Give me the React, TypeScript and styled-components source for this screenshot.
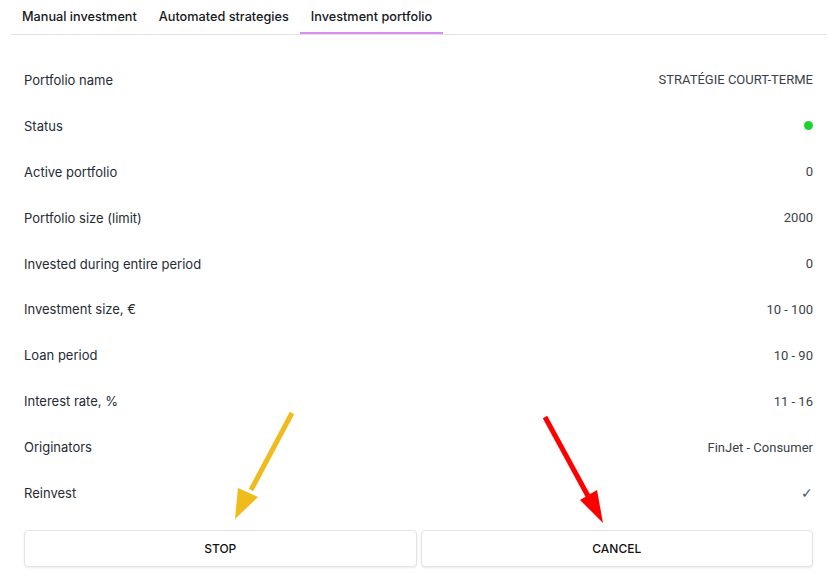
import styled, { createGlobalStyle } from 'styled-components';

const GlobalStyle = createGlobalStyle`
  body {
    margin: 0;
    background: #fff;
    font-family: 'Inter', 'Liberation Sans', sans-serif;
    color: #1f2530;
  }
`;

const rows: { label: string; value: string }[] = [
  { label: 'Portfolio name', value: 'STRATÉGIE COURT-TERME' },
  { label: 'Status', value: '' },
  { label: 'Active portfolio', value: '0' },
  { label: 'Portfolio size (limit)', value: '2000' },
  { label: 'Invested during entire period', value: '0' },
  { label: 'Investment size, €', value: '10 - 100' },
  { label: 'Loan period', value: '10 - 90' },
  { label: 'Interest rate, %', value: '11 - 16' },
  { label: 'Originators', value: 'FinJet - Consumer' },
  { label: 'Reinvest', value: '✓' },
];

const tabs = ['Manual investment', 'Automated strategies', 'Investment portfolio'];

const App = () => {
  return (
    <>
      <GlobalStyle />
      <Page>
        <TabBar>
          {tabs.map((t, i) => (
            <Tab key={t} $active={i === 2}>
              {t}
            </Tab>
          ))}
        </TabBar>
        <Content>
          <List>
            {rows.map((r) => (
              <Row key={r.label}>
                <Label>{r.label}</Label>
                {r.label === 'Status' ? (
                  <StatusDot />
                ) : (
                  <Value $light={r.label === 'Reinvest'}>{r.value}</Value>
                )}
              </Row>
            ))}
          </List>
          <Actions>
            <ActionBtn>STOP</ActionBtn>
            <ActionBtn>CANCEL</ActionBtn>
          </Actions>
          <Arrow viewBox='0 0 833 577' width='833' height='577'>
            <line x1='292' y1='413' x2='251' y2='490' stroke='#f0bb1c' strokeWidth='5' />
            <polygon points='235,519 238,488 258,497' fill='#f0bb1c' />
            <line x1='545' y1='417' x2='588' y2='496' stroke='#ff0000' strokeWidth='5' />
            <polygon points='603,523 580,500 597,490' fill='#ff0000' />
          </Arrow>
        </Content>
      </Page>
    </>
  );
};

const Page = styled.div`
  width: 833px;
  height: 577px;
  box-sizing: border-box;
  padding: 0 6px 0 11px;
  position: relative;
  overflow: hidden;
`;

const TabBar = styled.div`
  display: flex;
  height: 35px;
  border-bottom: 1px solid #e2e2e2;
  box-sizing: border-box;
`;

const Tab = styled.div<{ $active?: boolean }>`
  padding: 1px 11px 0;
  display: flex;
  align-items: center;
  font-size: 12.7px;
  font-weight: 500;
  color: #141821;
  height: 34px;
  box-sizing: border-box;
  border-bottom: 2px solid ${(p) => (p.$active ? '#d98ff0' : 'transparent')};
`;

const Content = styled.div`
  padding: 22px 14px 0 13px;
`;

const List = styled.div`
  display: flex;
  flex-direction: column;
`;

const Row = styled.div`
  height: 45.9px;
  display: flex;
  align-items: center;
  justify-content: space-between;
`;

const Label = styled.span`
  font-size: 13px;
  color: #252b36;
`;

const Value = styled.span<{ $light?: boolean }>`
  font-family: 'Roboto', 'Liberation Sans', sans-serif;
  font-size: ${(p) => (p.$light ? '14px' : '13px')};
  font-weight: ${(p) => (p.$light ? 300 : 400)};
  color: ${(p) => (p.$light ? '#4a5566' : '#3a3f48')};
`;

const StatusDot = styled.span`
  width: 9px;
  height: 9px;
  border-radius: 50%;
  background: #1ed12e;
`;

const Actions = styled.div`
  margin-top: 14px;
  display: grid;
  grid-template-columns: 1fr 1fr;
  gap: 4px;
`;

const ActionBtn = styled.button`
  height: 37px;
  background: #fff;
  border: 1px solid #e3e3e3;
  border-radius: 4px;
  box-shadow: 0 1px 2px rgba(0, 0, 0, 0.08);
  font-family: 'Inter', 'Liberation Sans', sans-serif;
  font-size: 12px;
  font-weight: 500;
  color: #111;
  cursor: pointer;
`;

const Arrow = styled.svg`
  position: absolute;
  left: 0;
  top: 0;
  pointer-events: none;
`;

export default App;
